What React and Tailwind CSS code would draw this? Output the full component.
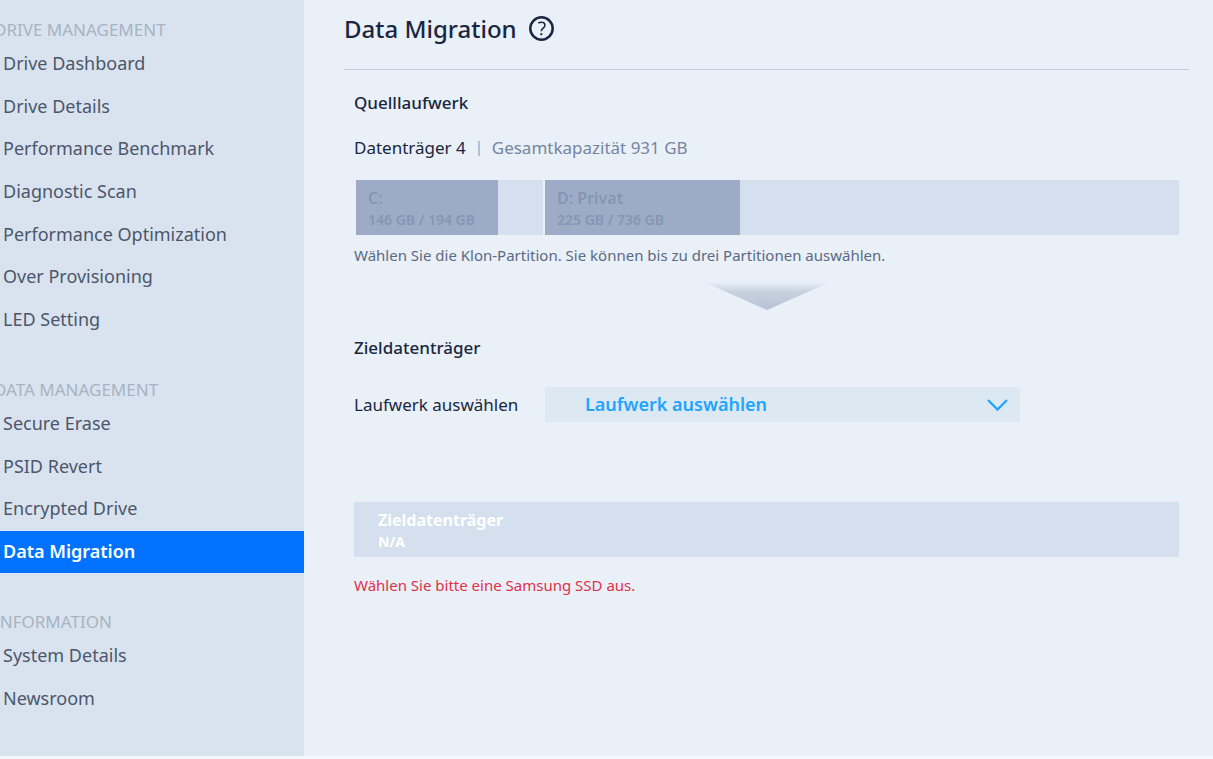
const navigation = [
  {
    title: "DRIVE MANAGEMENT",
    listClass: "min-h-[298px]",
    items: [
      "Drive Dashboard",
      "Drive Details",
      "Performance Benchmark",
      "Diagnostic Scan",
      "Performance Optimization",
      "Over Provisioning",
      "LED Setting",
    ],
  },
  {
    title: "DATA MANAGEMENT",
    listClass: "min-h-[170px]",
    items: ["Secure Erase", "PSID Revert", "Encrypted Drive", "Data Migration"],
  },
  {
    title: "INFORMATION",
    listClass: "min-h-[85px]",
    items: ["System Details", "Newsroom"],
  },
];

const partitions = [
  { name: "C:", used: 146, total: 194, fill: 76 },
  { name: "D: Privat", used: 225, total: 736, fill: 30.8 },
];

function Sidebar({ current }) {
  return (
    <nav className="flex w-[304px] shrink-0 flex-col gap-[35px] overflow-hidden bg-[#d9e3ef] pt-4">
      {navigation.map((group) => (
        <section key={group.title}>
          <h2 className="-ml-1.5 text-[17px] leading-[27px] text-[#a6b3c2]">{group.title}</h2>
          <ul className={`flex flex-col ${group.listClass}`}>
            {group.items.map((item) => (
              <li key={item} className="flex flex-1">
                <a
                  href="#"
                  aria-current={item === current ? "page" : undefined}
                  className={`flex flex-1 items-center pb-0.5 pl-[3px] text-lg ${
                    item === current ? "bg-[#0072ff] font-semibold text-white" : "text-[#4c566b]"
                  }`}
                >
                  {item}
                </a>
              </li>
            ))}
          </ul>
        </section>
      ))}
    </nav>
  );
}

function Partition({ name, used, total, fill }) {
  return (
    <button type="button" className="flex h-[55px] bg-[#d4e0ee] text-left">
      <span
        className="flex h-full flex-col justify-center bg-[#9eabc6] pl-3 whitespace-nowrap text-[#8595b5]"
        style={{ width: `${fill}%` }}
      >
        <span className="text-base leading-6 font-semibold">{name}</span>
        <span className="text-sm leading-5 font-semibold">
          {used} GB / {total} GB
        </span>
      </span>
    </button>
  );
}

export default function App() {
  return (
    <div className="flex min-h-screen bg-[#f4f9ff] pb-[3px] font-['Noto_Sans',sans-serif] text-[#1a2640]">
      <Sidebar current="Data Migration" />
      <main className="flex-1 bg-[#e9f0f8] pr-6 pl-10">
        <header className="flex h-[70px] items-start gap-3 border-b border-[#c3cedc] pt-3">
          <h1 className="text-2xl leading-[34px] font-medium">Data Migration</h1>
          <button type="button" aria-label="Hilfe" className="mt-1">
            <svg className="size-[25px]" viewBox="0 0 25 25" fill="none" stroke="currentColor">
              <circle cx="12.5" cy="12.5" r="11.2" strokeWidth="2.5" />
              <path d="M9.2 7.2C10.4 6.5 11.6 6.2 12.8 6.3c2 .1 3.1 1.3 3.1 2.9 0 3.2-3.6 2.8-3.6 6" strokeWidth="1.5" />
              <path d="M12.3 17.2v2" strokeWidth="2" />
            </svg>
          </button>
        </header>

        <div className="px-2.5">
          <section className="pt-[21px]">
            <h2 className="text-[17px] leading-6 font-medium">Quelllaufwerk</h2>
            <p className="mt-[21px] flex items-center text-[17px] leading-6">
              <span>Datenträger 4</span>
              <span className="mx-3 h-[15px] w-0.5 bg-[#b3bfd2]" />
              <span className="text-[#7685a0]">Gesamtkapazität 931 GB</span>
            </p>
            <div className="mt-5 ml-0.5 grid grid-cols-[187fr_634fr] gap-0.5">
              {partitions.map((partition) => (
                <Partition key={partition.name} {...partition} />
              ))}
            </div>
            <p className="mt-2 text-[15px] leading-6 text-[#5b6984]">
              Wählen Sie die Klon-Partition. Sie können bis zu drei Partitionen auswählen.
            </p>
          </section>

          <svg className="mx-auto mt-[15px] h-7 w-[126px]" viewBox="0 0 126 28">
            <defs>
              <linearGradient id="arrow" x1="0" y1="0" x2="0" y2="1">
                <stop offset="0" stopColor="#b7c4d7" stopOpacity="0" />
                <stop offset="0.35" stopColor="#b9c3d2" stopOpacity="0.7" />
                <stop offset="1" stopColor="#b4c3d8" />
              </linearGradient>
            </defs>
            <path d="M0 0H126L63 28Z" fill="url(#arrow)" />
          </svg>

          <section className="pt-[26px]">
            <h2 className="text-[17px] leading-6 font-medium">Zieldatenträger</h2>
            <div className="mt-[27px] flex items-center">
              <label htmlFor="target" className="w-[191px] text-[17px]">
                Laufwerk auswählen
              </label>
              <div className="grid w-[475px] items-center bg-[#dce8f2]">
                <select
                  id="target"
                  className="col-start-1 row-start-1 h-[35px] w-full appearance-none bg-transparent pb-0.5 pl-10 text-lg font-semibold text-[#22a4ff]"
                >
                  <option>Laufwerk auswählen</option>
                </select>
                <svg
                  className="pointer-events-none col-start-1 row-start-1 mr-3 h-3 w-[21px] justify-self-end"
                  viewBox="0 0 21 12"
                  fill="none"
                  stroke="#22a4ff"
                  strokeWidth="2.4"
                >
                  <path d="M1 1L10.5 10.5L20 1" />
                </svg>
              </div>
            </div>

            <div className="mt-20 flex h-[55px] flex-col justify-center bg-[#d4e0ee] pl-6 text-white">
              <span className="text-base leading-6 font-bold">Zieldatenträger</span>
              <span className="text-sm leading-5 font-bold">N/A</span>
            </div>
            <p className="mt-4 text-[15px] leading-6 text-[#e23048]">Wählen Sie bitte eine Samsung SSD aus.</p>
          </section>
        </div>
      </main>
    </div>
  );
}
